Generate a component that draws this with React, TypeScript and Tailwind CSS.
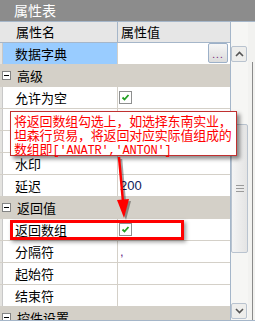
import { FC } from 'react';

type Row =
    | { kind: 'cat'; label: string }
    | { kind: 'prop'; label: string; value?: string; check?: boolean; selected?: boolean; ellipsis?: boolean; valueClass?: string };

// the two rows under the callout are covered in the screenshot, so they carry no label
const rows: Row[] = [
    { kind: 'prop', label: '数据字典', selected: true, ellipsis: true },
    { kind: 'cat', label: '高级' },
    { kind: 'prop', label: '允许为空', check: true },
    { kind: 'prop', label: '' },
    { kind: 'prop', label: '' },
    { kind: 'prop', label: '水印' },
    { kind: 'prop', label: '延迟', value: '200', valueClass: 'text-[#10205a]' },
    { kind: 'cat', label: '返回值' },
    { kind: 'prop', label: '返回数组', check: true },
    { kind: 'prop', label: '分隔符', value: ',', valueClass: 'text-[#6a2a8a]' },
    { kind: 'prop', label: '起始符' },
    { kind: 'prop', label: '结束符' },
    { kind: 'cat', label: '控件设置' },
];

const CheckBox: FC = () => (
    <svg width="13" height="13" viewBox="0 0 13 13">
        <rect x="0.5" y="0.5" width="12" height="12" fill="#fff" stroke="#8e8f8f" />
        <path d="M3.5 6.5 L5.5 8.5 L9.5 4" fill="none" stroke="#21a021" strokeWidth="1.8" />
    </svg>
);

const MinusBox: FC = () => (
    <div className="w-[9px] h-[9px] border border-[#848484] bg-white flex items-center justify-center shrink-0">
        <div className="w-[5px] h-px bg-black" />
    </div>
);

const ScrollButton: FC<{ up?: boolean }> = ({ up }) => (
    <div className="w-[16px] h-[16px] border border-[#b9c3cf] rounded-[2px] bg-[#eeeeec] flex items-center justify-center">
        <svg width="9" height="6" viewBox="0 0 9 6">
            <path d={up ? 'M1 5 L4.5 1.5 L8 5' : 'M1 1 L4.5 4.5 L8 1'} fill="none" stroke="#555" strokeWidth="1.6" />
        </svg>
    </div>
);

const PropRow: FC<{ row: Row }> = ({ row }) => {
    if (row.kind === 'cat') {
        return (
            <div className="h-[22px] shrink-0 bg-[#d4d0c8] border-b border-[#d4d0c8] flex items-center">
                <div className="pl-[2px] pr-[6px]">
                    <MinusBox />
                </div>
                <span className="text-[13px] text-black leading-none">{row.label}</span>
            </div>
        );
    }
    return (
        <div className="h-[22px] shrink-0 flex border-b border-[#d4d0c8] bg-white">
            <div className="w-[3px] bg-[#e4e3e0] border-r border-[#c8c8c8]" />
            <div className={`w-[115px] pl-[12px] flex items-center border-r border-[#d4d0c8] text-[13px] ${row.selected ? 'bg-[#99ccff]' : ''}`}>
                {row.label}
            </div>
            <div className="flex-1 flex items-center pl-[1px] relative">
                {row.check && <CheckBox />}
                {row.value && <span className={`text-[13px] pl-[1px] font-['Liberation_Sans',sans-serif] ${row.valueClass ?? ''}`}>{row.value}</span>}
                {row.ellipsis && (
                    <div className="absolute right-[2px] top-0 w-[20px] h-[20px] border border-[#9cb0c8] rounded-[2px] bg-gradient-to-b from-[#f6f6f6] to-[#dcdcdc] flex items-end justify-center pb-[3px]">
                        <span className="text-[10px] leading-none text-[#7a2a7a] tracking-[1px]">...</span>
                    </div>
                )}
            </div>
        </div>
    );
};

export default function App() {
    return (
        <div className="w-[255px] h-[321px] relative overflow-hidden bg-[#f2f2f0] font-['Noto_Sans_CJK_SC',sans-serif] text-black">
            {/* Title bar */}
            <div className="h-[21px] bg-[#8c8c8c] text-white text-[14px] leading-[21px] pl-[14px]">属性表</div>

            <div className="flex h-[300px] border-t border-b border-[#a5b6c9]">
                {/* Property grid */}
                <div className="w-[231px] flex flex-col border-r border-[#a5b6c9] overflow-hidden">
                    <div className="h-[21px] shrink-0 flex bg-[#e6e6e6] border-b border-[#a5b6c9] text-[13px]">
                        <div className="w-[118px] pl-[16px] flex items-center border-r border-[#a5b6c9]">属性名</div>
                        <div className="flex-1 pl-[3px] flex items-center">属性值</div>
                    </div>
                    {rows.map((r, i) => (
                        <PropRow key={i} row={r} />
                    ))}
                </div>

                {/* Scrollbar */}
                <div className="w-[17px] flex flex-col pt-[24px] pb-[1px] bg-[#f6f6f4]">
                    <ScrollButton up />
                    <div className="flex-1 flex flex-col pt-[62px] pb-[50px]">
                        <div className="flex-1 border border-[#b9c3cf] rounded-[2px] bg-gradient-to-r from-[#f4f4f4] to-[#e4e4e4] flex flex-col items-center justify-center gap-[2px]">
                            <div className="w-[8px] h-px bg-[#9a9a9a]" />
                            <div className="w-[8px] h-px bg-[#9a9a9a]" />
                            <div className="w-[8px] h-px bg-[#9a9a9a]" />
                        </div>
                    </div>
                    <ScrollButton />
                </div>

                <div className="flex-1 flex pt-[40px] pl-[4px]">
                    <div className="w-px bg-[#8a8a8a]" />
                </div>
            </div>

            {/* Callout */}
            <div className="absolute left-[10px] top-[111px] w-[227px] h-[45px] bg-white border border-[#c03030] shadow-[3px_3px_4px_rgba(0,0,0,0.45)] pl-[3px] pt-[2px] text-[#ff0000] text-[13px] leading-[14px] tracking-[-0.2px]">
                <div>将返回数组勾选上，如选择东南实业，</div>
                <div>坦森行贸易，将返回对应实际值组成的</div>
                <div>
                    数组即<span className="font-['Liberation_Mono',monospace] text-[12px]">['ANATR','ANTON']</span>
                </div>
            </div>

            {/* Highlight box */}
            <div className="absolute left-[10px] top-[220px] w-[174px] h-[20px] border-[3px] border-[#ff0000] shadow-[2px_2px_4px_rgba(0,0,0,0.4)]" />

            {/* Arrow */}
            <svg className="absolute left-0 top-0" width="255" height="321" viewBox="0 0 255 321">
                <g opacity="0.35" transform="translate(2,2)">
                    <path d="M119 157 L123 202" stroke="#000" strokeWidth="2.5" />
                    <path d="M117 200 L124 218 L129 199 Z" fill="#000" />
                </g>
                <path d="M119 157 L123 202" stroke="#ff0000" strokeWidth="2.5" />
                <path d="M117 200 L124 218 L129 199 Z" fill="#ff0000" />
            </svg>
        </div>
    );
}
